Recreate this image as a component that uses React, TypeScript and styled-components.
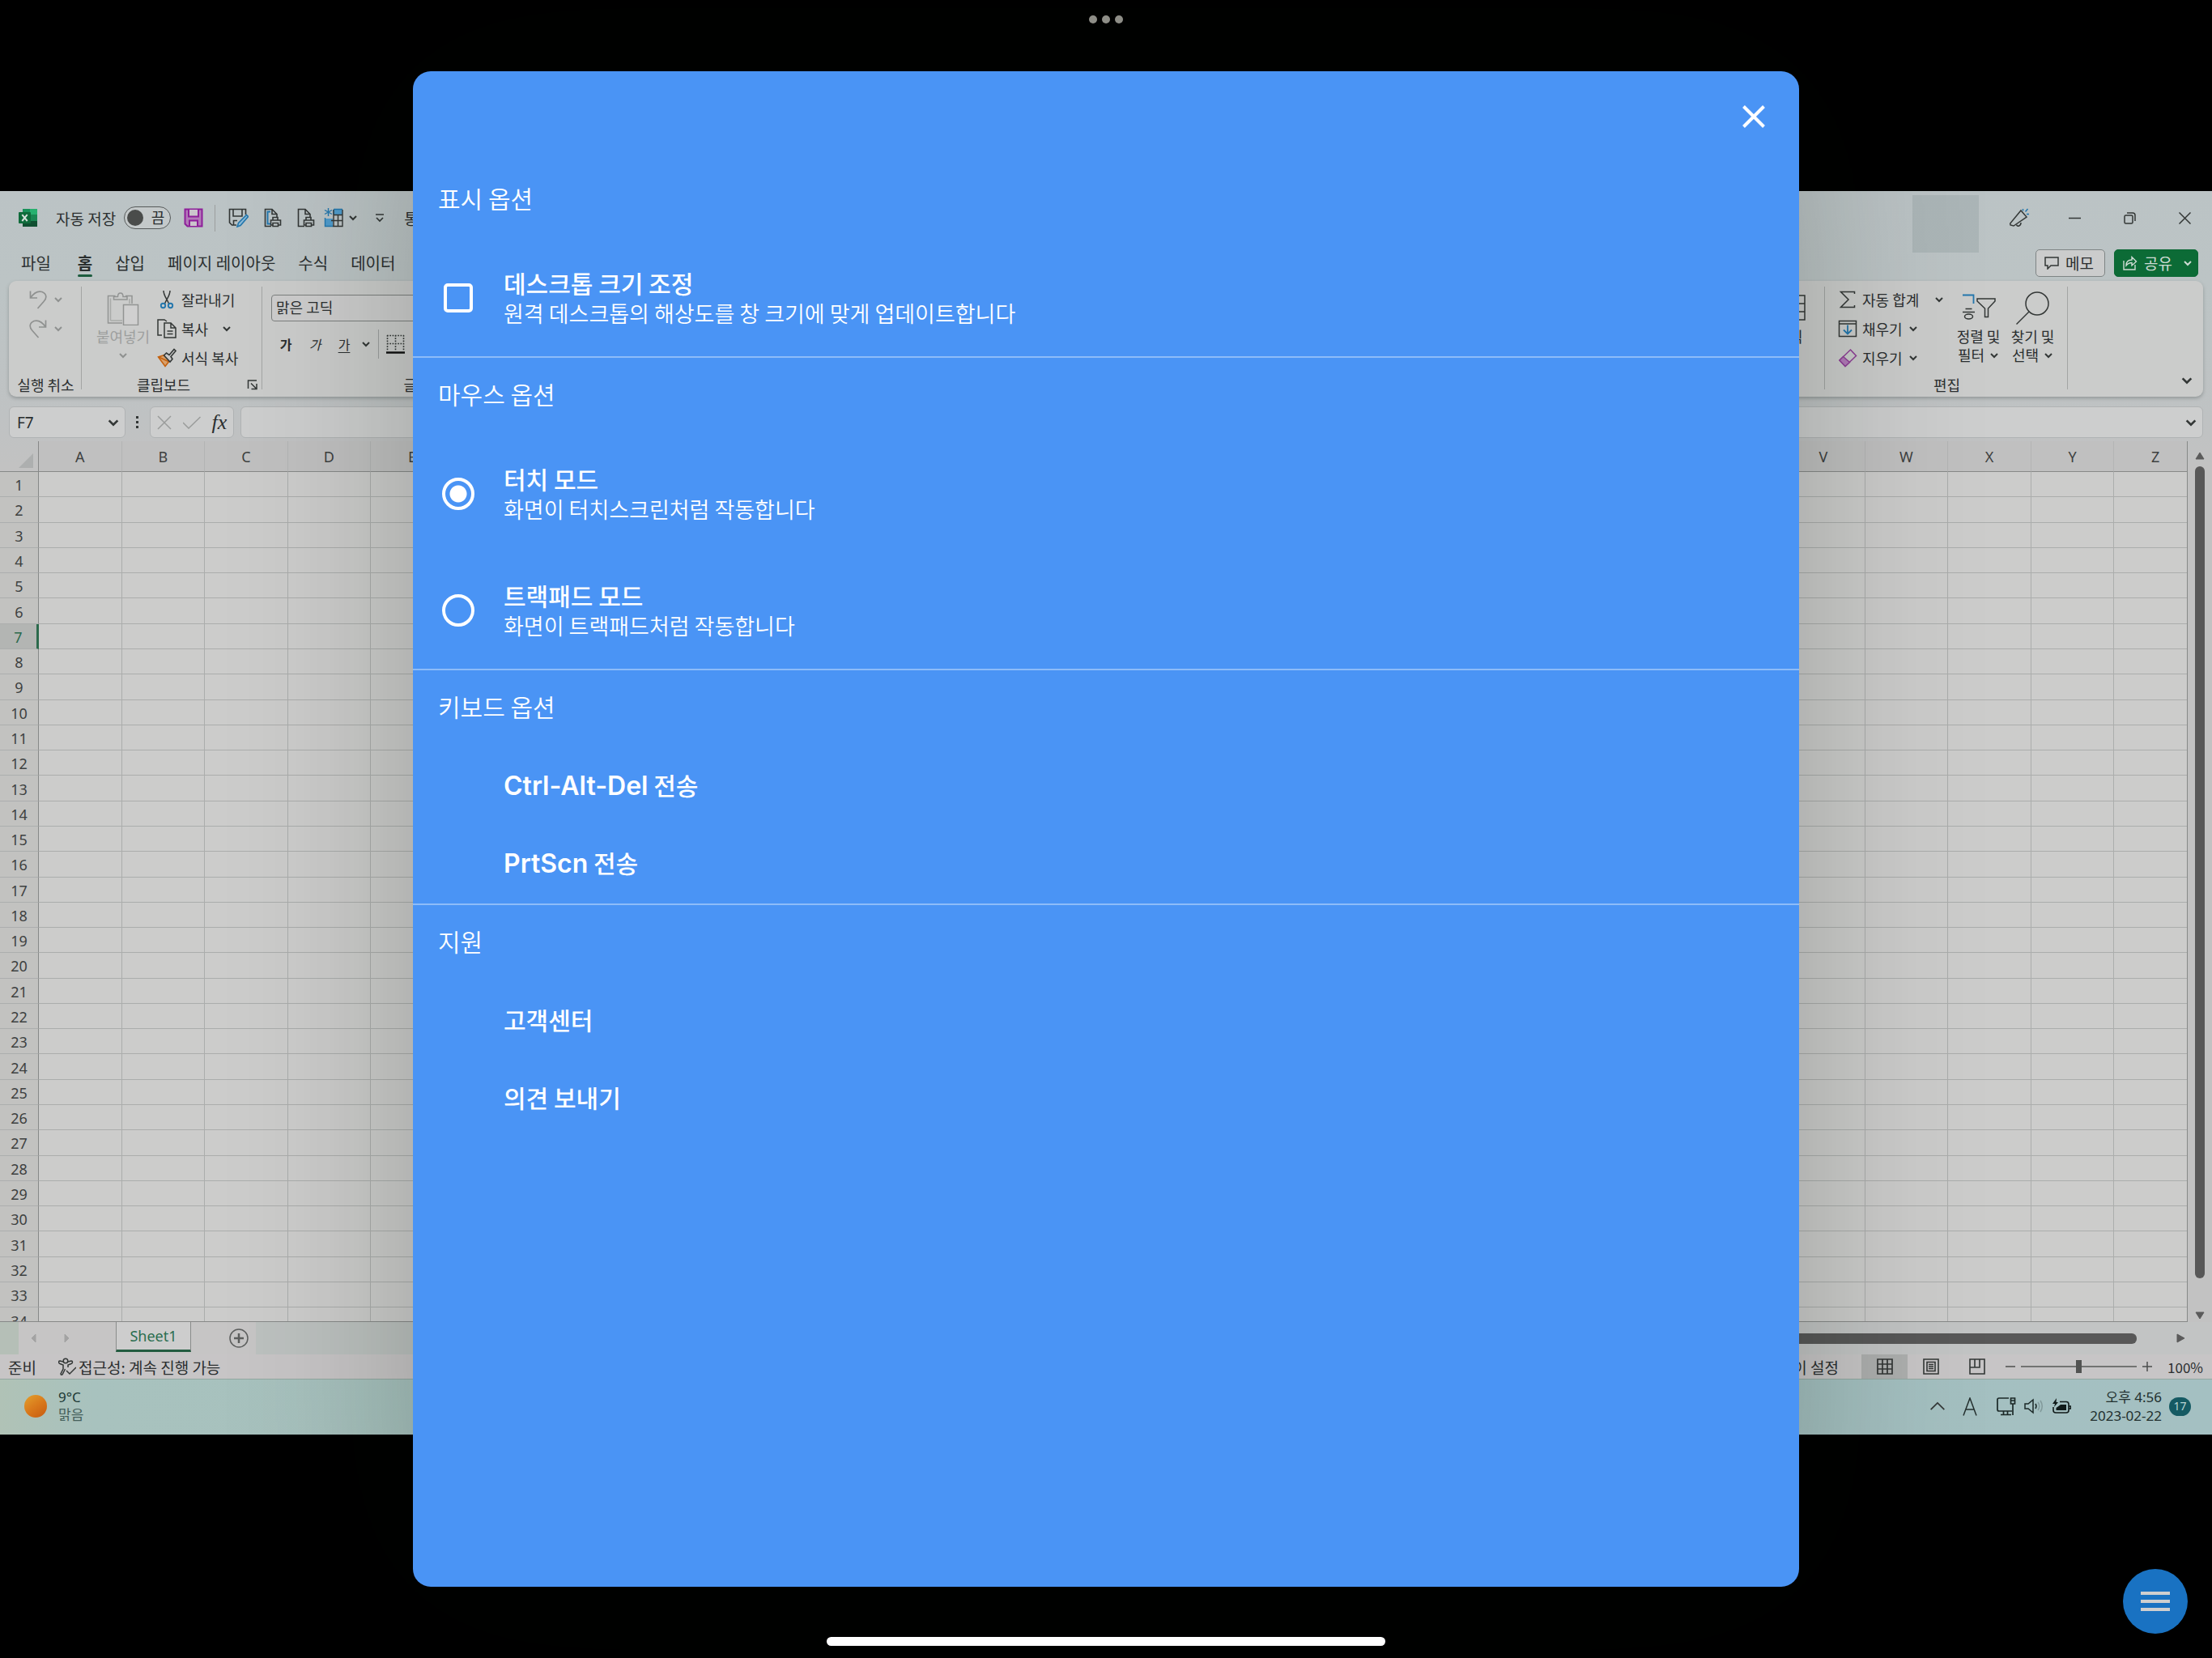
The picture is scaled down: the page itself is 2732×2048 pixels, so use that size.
import React from "react";
import styled, { createGlobalStyle, css } from "styled-components";

const uiFont = `"Noto Sans", "Noto Sans CJK KR", sans-serif`;
const krFont = `"Noto Sans CJK KR", "Noto Sans", sans-serif`;

const GlobalStyle = createGlobalStyle`
  *, *::before, *::after { box-sizing: border-box; }
  html, body { margin: 0; padding: 0; background: #000; }
  body { font-family: ${krFont}; }
  button, input, select { font: inherit; color: inherit; margin: 0; }
  button { border: 0; padding: 0; background: none; cursor: pointer; }
  svg { display: block; flex: none; }
`;

/* ---------- screen ---------- */

const Screen = styled.div`
  position: relative;
  min-height: 100vh;
  padding-bottom: 40px;
  display: flex;
  flex-direction: column;
  justify-content: center;
  background: #000;
  overflow: hidden;
`;

const RemoteDesktop = styled.main`
  width: 100%;
  aspect-ratio: 683 / 384;
  display: flex;
  flex-direction: column;
  color: #2b2f30;
  font-size: 18px;
  line-height: 23px;
  white-space: nowrap;
  overflow: hidden;
`;

const ExcelWindow = styled.section`
  flex: 1;
  min-height: 0;
  display: flex;
  flex-direction: column;
  background: linear-gradient(#bbc3c5 0px, #bcc4c5 110px, #bfc2c3 280px, #c2c2c2 340px);
`;

/* ---------- title bar ---------- */

const TitleBar = styled.header`
  height: 66px;
  display: flex;
  align-items: center;
  justify-content: space-between;
  font-size: 19px;
`;

const TitleSide = styled.div<{ $left?: number }>`
  display: flex;
  align-items: center;
  height: 100%;
  padding-left: ${(p) => p.$left ?? 0}px;
`;

const AutoSave = styled.label`
  display: flex;
  align-items: center;
  gap: 10px;
  padding: 0 8px 0 22px;
`;

const Toggle = styled.input`
  appearance: none;
  position: relative;
  width: 58px;
  height: 28px;
  border: 1px solid #565a5a;
  border-radius: 14px;
  background: #c4c9ca;
  &::before {
    content: "";
    position: absolute;
    left: 3px;
    top: 3px;
    width: 20px;
    height: 20px;
    border-radius: 50%;
    background: #4a4c4b;
  }
  &::after {
    content: "끔";
    position: absolute;
    right: 7px;
    top: 0;
    font-size: 18px;
    line-height: 25px;
  }
`;

const IconButton = styled.button<{ $w: number }>`
  width: ${(p) => p.$w}px;
  height: 36px;
  display: flex;
  align-items: center;
  justify-content: center;
  gap: 6px;
`;

const Rule = styled.span<{ $h?: number; $m?: string }>`
  flex: none;
  width: 1px;
  ${(p) => (p.$h ? `height: ${p.$h}px;` : "align-self: stretch;")}
  margin: ${(p) => p.$m ?? "0"};
  background: #9c9f9f;
`;

const AccountPatch = styled.span`
  width: 82px;
  height: 71px;
  margin: 5px 16px 0 0;
  align-self: flex-start;
  background: rgba(125, 138, 145, 0.25);
`;

/* ---------- ribbon tabs ---------- */

const TabRow = styled.div`
  height: 45px;
  display: flex;
  align-items: center;
  justify-content: space-between;
  padding: 0 17px 0 22px;
`;

const Tabs = styled.nav`
  display: flex;
  gap: 20px;
  height: 100%;
`;

const Tab = styled.button<{ $active?: boolean }>`
  position: relative;
  padding: 0 4px;
  font-size: 20px;
  line-height: 44px;
  font-weight: ${(p) => (p.$active ? 600 : 400)};
  &:first-child { padding-right: 9px; }
  ${(p) =>
    p.$active &&
    css`
      &::after {
        content: "";
        position: absolute;
        left: 4px;
        right: 4px;
        bottom: 5px;
        height: 3px;
        border-radius: 2px;
        background: #1d5c3e;
      }
    `}
`;

const TabActions = styled.div`
  display: flex;
  gap: 11px;
`;

const ActionButton = styled.button<{ $green?: boolean }>`
  height: 34px;
  padding: 0 ${(p) => (p.$green ? 6 : 13)}px 0 10px;
  display: flex;
  align-items: center;
  gap: 8px;
  border-radius: 5px;
  font-size: 19px;
  border: 1px solid ${(p) => (p.$green ? "#0c6835" : "#7f8585")};
  background: ${(p) => (p.$green ? "#0c6b36" : "#cbcccc")};
  color: ${(p) => (p.$green ? "#cfdcd4" : "#2b2f30")};
  & > svg:last-child:not(:first-child) { margin-left: 5px; }
`;

/* ---------- ribbon ---------- */

const Ribbon = styled.div`
  height: 143px;
  margin: 0 11px;
  display: flex;
  border-radius: 9px;
  background: #cbcccb;
  box-shadow: 0 2px 4px rgba(90, 100, 100, 0.45);
`;

const RibbonRule = styled(Rule)`
  margin: 7px 0 9px;
  background: #a3a5a4;
`;

const Group = styled.div<{ $w?: number }>`
  ${(p) => (p.$w ? `width: ${p.$w}px;` : "")}
  display: flex;
  flex-direction: column;
`;

const GroupBody = styled.div<{ $left?: number; $right?: number }>`
  flex: 1;
  display: flex;
  padding-left: ${(p) => p.$left ?? 0}px;
  padding-right: ${(p) => p.$right ?? 0}px;
`;

const GroupLabel = styled.div`
  height: 30px;
  display: flex;
  align-items: center;
  & > span { flex: 1; text-align: center; padding-left: 2px; }
  & > svg { margin: 0 4px; }
`;

const ToolColumn = styled.div`
  display: flex;
  flex-direction: column;
  padding-top: 5px;
`;

const ToolRow = styled.button<{ $gap?: number }>`
  height: 36px;
  display: flex;
  align-items: center;
  gap: 6px;
  & > svg:last-child { margin-left: ${(p) => p.$gap ?? 1}px; }
`;

const BigButton = styled.button<{ $w: number; $muted?: boolean }>`
  width: ${(p) => p.$w}px;
  padding-top: 13px;
  display: flex;
  flex-direction: column;
  align-items: center;
  color: ${(p) => (p.$muted ? "#9d9f9e" : "inherit")};
  & > svg { margin-bottom: 2px; }
`;

const BigLine = styled.span`
  height: 23px;
  display: flex;
  align-items: center;
  gap: 6px;
`;

const FontColumn = styled.div`
  flex: 1;
  display: flex;
  flex-direction: column;
  gap: 10px;
  padding-top: 17px;
`;

const FontSelect = styled.select`
  appearance: none;
  width: 260px;
  height: 33px;
  padding: 0 5px 2px;
  border: 1px solid #7c7f7e;
  border-radius: 4px;
  background: #cdcdcd;
  font-size: 18px;
`;

const FontRow = styled.div`
  display: flex;
  align-items: center;
  height: 36px;
`;

const FontButton = styled(IconButton)<{ $kind?: "b" | "i" | "u" }>`
  font-size: 16px;
  font-weight: ${(p) => (p.$kind === "b" ? 700 : 400)};
  font-style: ${(p) => (p.$kind === "i" ? "italic" : "normal")};
  text-decoration: ${(p) => (p.$kind === "u" ? "underline" : "none")};
  text-underline-offset: 3px;
`;

const Filler = styled.div`
  flex: 1;
`;

const CollapseCell = styled.div`
  width: 167px;
  display: flex;
  align-items: flex-end;
  justify-content: flex-end;
  padding: 0 2px 2px 0;
`;

/* ---------- formula bar ---------- */

const FormulaBar = styled.div`
  display: flex;
  align-items: center;
  padding: 12px 11px 4px;
  & > :last-child { margin-left: 8px; }
`;

const Field = styled.div<{ $w?: number }>`
  ${(p) => (p.$w ? `width: ${p.$w}px;` : "flex: 1;")}
  height: 39px;
  display: flex;
  align-items: center;
  border: 1px solid #b0b3b4;
  border-radius: 6px;
  background: #cdcece;
`;

const FieldInput = styled.input`
  flex: 1;
  min-width: 0;
  height: 100%;
  border: 0;
  outline: 0;
  background: none;
  padding: 0 9px;
  font-family: ${uiFont};
  font-size: 19px;
`;

const Fx = styled.span`
  font-family: "Liberation Serif", serif;
  font-style: italic;
  font-size: 26px;
`;

/* ---------- sheet ---------- */

const SheetArea = styled.div`
  flex: 1;
  min-height: 0;
  display: flex;
`;

const SheetClip = styled.div`
  flex: 1;
  min-width: 0;
  overflow: hidden;
  border-right: 1px solid #878988;
  border-bottom: 1px solid #878988;
`;

const Grid = styled.table`
  width: calc(100% + 13px);
  height: calc(100% + 15px);
  table-layout: fixed;
  border-collapse: separate;
  border-spacing: 0;
  font-family: ${uiFont};
  font-size: 18px;
  line-height: 20px;
`;

const Corner = styled.td`
  width: 48px;
  height: 38px;
  padding: 0 6px 4px 0;
  vertical-align: bottom;
  border-right: 1px solid #878988;
  border-bottom: 1px solid #878988;
  & > svg { margin-left: auto; }
`;

const ColHead = styled.th`
  height: 38px;
  padding: 0;
  font-weight: 400;
  color: #3e4140;
  background: #c0c0c0;
  border-right: 1px solid #b3b4b4;
  border-bottom: 1px solid #878988;
`;

const RowHead = styled.th<{ $active?: boolean }>`
  padding: 2px 0 0;
  font-weight: 400;
  color: ${(p) => (p.$active ? "#2b6a4c" : "#3e4140")};
  background: ${(p) => (p.$active ? "#b3b5b3" : "#c2c2c0")};
  border-right: ${(p) => (p.$active ? "3px solid #2b6a4c" : "1px solid #878988")};
  border-bottom: 1px solid #acaeae;
`;

const Cell = styled.td`
  padding: 0;
  background: #cccccb;
  border-right: 1px solid #abadac;
  border-bottom: 1px solid #abadac;
`;

const ScrollColumn = styled.div`
  width: 30px;
  display: flex;
  flex-direction: column;
  align-items: center;
  gap: 7px;
  padding: 12px 0 2px;
`;

const ScrollThumb = styled.div`
  flex: 1;
  width: 12px;
  margin-bottom: 33px;
  border-radius: 6px;
  background: #585858;
`;

const SheetBar = styled.div`
  height: 40px;
  display: flex;
  align-items: center;
  background: linear-gradient(90deg, #b5bfb7 0, #b5bfb7 23px, #c6c5c5 23px, #c6c5c5 316px, #bcc1bf 316px, #bcc1bf 50%, #c2c4c4 50%);
`;

const SheetNav = styled.div`
  width: 143px;
  display: flex;
  gap: 30px;
  padding-left: 35px;
`;

const SheetTab = styled.button`
  width: 93px;
  height: 37px;
  align-self: flex-start;
  border: solid #8a8c8b;
  border-width: 0 1px;
  border-bottom: 3px solid #235c40;
  background: #cdcdcd;
  color: #2b6e4f;
  font-family: ${uiFont};
  font-size: 18px;
`;

const HScroll = styled.div`
  flex: 1;
  display: flex;
  align-items: center;
  justify-content: space-between;
  padding: 0 33px 0 900px;
`;

const HThumb = styled.div`
  flex: 1;
  height: 13px;
  margin-right: 48px;
  border-radius: 6px;
  background: #585858;
`;

/* ---------- status bar ---------- */

const StatusBar = styled.footer`
  height: 31px;
  display: flex;
  align-items: center;
  justify-content: space-between;
  border-bottom: 1px solid #93a8a1;
  background: #c7c5c6;
  font-size: 19px;
`;

const StatusSide = styled.div<{ $left?: number; $right?: number }>`
  height: 100%;
  display: flex;
  align-items: center;
  padding: 0 ${(p) => p.$right ?? 0}px 0 ${(p) => p.$left ?? 0}px;
`;

const StatusItem = styled.span<{ $left?: number; $right?: number }>`
  display: flex;
  align-items: center;
  gap: 3px;
  padding: 0 ${(p) => p.$right ?? 0}px 0 ${(p) => p.$left ?? 0}px;
`;

const ZoomValue = styled.span`
  padding-left: 12px;
  font-size: 17px;
`;

const ViewButton = styled.button<{ $active?: boolean }>`
  width: 57px;
  height: 100%;
  display: flex;
  align-items: center;
  justify-content: center;
  background: ${(p) => (p.$active ? "#adafae" : "none")};
`;

const ZoomRange = styled.input`
  appearance: none;
  width: 143px;
  height: 18px;
  background: linear-gradient(#727372, #727372) center / 100% 2px no-repeat;
  &::-webkit-slider-thumb {
    appearance: none;
    width: 7px;
    height: 16px;
    background: #525352;
  }
`;

/* ---------- taskbar ---------- */

const Taskbar = styled.footer`
  height: 68px;
  display: flex;
  align-items: center;
  justify-content: space-between;
  padding: 0 26px 2px 30px;
  background: linear-gradient(90deg, #b0c2b6 0, #a8c2be 115px, #a4bfbc 50%, #a4c0c2 100%);
`;

const Weather = styled.div`
  display: flex;
  align-items: center;
  gap: 14px;
  font-family: ${uiFont};
  font-size: 17px;
  line-height: 22px;
  color: #1d3a35;
  & span { display: block; }
  & span + span { color: #45605b; }
`;

const Sun = styled.i`
  width: 28px;
  height: 28px;
  border-radius: 50%;
  background: linear-gradient(145deg, #e3a02c, #d9791b 50%, #c65a10);
`;

const Tray = styled.div`
  display: flex;
  align-items: center;
  font-family: ${uiFont};
`;

const TrayItem = styled.button<{ $w: number }>`
  width: ${(p) => p.$w}px;
  height: 40px;
  display: flex;
  align-items: center;
  justify-content: center;
`;

const Clock = styled.time`
  width: 90px;
  margin: 0 9px 0 14px;
  text-align: right;
  font-size: 17px;
  line-height: 23px;
  color: #22302f;
`;

const Badge = styled.span`
  width: 27px;
  height: 23px;
  border-radius: 12px;
  background: #155a63;
  color: #b9d3d3;
  font-size: 14px;
  line-height: 22px;
  text-align: center;
`;

/* ---------- options dialog ---------- */

const Overlay = styled.div`
  position: absolute;
  inset: 0;
  display: flex;
  justify-content: center;
  padding: 88px 30px;
`;

const Dialog = styled.section`
  width: 100%;
  max-width: 1712px;
  border-radius: 22px;
  background: #4a94f5;
  color: #fff;
  box-shadow: 0 0 230px rgba(0, 18, 6, 0.24);
`;

const DialogHeader = styled.div`
  height: 112px;
  display: flex;
  justify-content: flex-end;
`;

const CloseButton = styled.button`
  width: 112px;
  height: 112px;
  display: flex;
  align-items: center;
  justify-content: center;
`;

const OptionSection = styled.section`
  & + & { border-top: 2px solid #8dbcf9; }
`;

const OptionHeading = styled.h2`
  margin: 0;
  height: 96px;
  padding: 0 31px 8px;
  display: flex;
  align-items: center;
  font-size: 30px;
  font-weight: 350;
`;

const OptionRow = styled.label`
  height: 144px;
  display: grid;
  grid-template-columns: 112px 1fr;
  align-items: center;
`;

const Choice = styled.input`
  appearance: none;
  justify-self: center;
  border: 4px solid #fff;
  cursor: pointer;
  &[type="checkbox"] {
    width: 36px;
    height: 36px;
    border-radius: 5px;
  }
  &[type="radio"] {
    width: 40px;
    height: 40px;
    border-radius: 50%;
  }
  &[type="radio"]:checked {
    background: radial-gradient(circle, #fff 10px, transparent 11px);
  }
`;

const OptionTitle = styled.span`
  display: block;
  margin-bottom: 4px;
  font-size: 30px;
  font-weight: 500;
  line-height: 34px;
`;

const OptionHint = styled.span`
  display: block;
  font-size: 27px;
  font-weight: 350;
  line-height: 34px;
`;

const CommandButton = styled.button`
  width: 100%;
  height: 96px;
  padding: 0 112px 6px;
  display: block;
  text-align: left;
  font-size: 30px;
  font-weight: 500;
  line-height: 90px;
`;

const KeyName = styled.span`
  font-family: Inter, "Noto Sans", sans-serif;
  font-size: 32px;
  font-weight: 600;
`;

const Multitask = styled.div`
  position: absolute;
  top: 19px;
  left: 0;
  right: 0;
  display: flex;
  justify-content: center;
  gap: 6px;
  & i { width: 10px; height: 10px; border-radius: 50%; background: #8e8e87; }
`;

const HomeIndicator = styled.div`
  position: absolute;
  bottom: 15px;
  left: 50%;
  width: 690px;
  height: 11px;
  border-radius: 6px;
  background: #fff;
  transform: translateX(-50%);
`;

const MenuButton = styled.button`
  position: absolute;
  right: 30px;
  bottom: 30px;
  width: 80px;
  height: 80px;
  border-radius: 50%;
  background: #1972c2;
  display: flex;
  flex-direction: column;
  align-items: center;
  justify-content: center;
  gap: 6px;
  & i { width: 36px; height: 4px; background: #cfcfcf; }
`;

/* ---------- drawings ---------- */

const ink = "#333736";

const Chevron = ({ s = 12, c = ink, w = 2, up = false }: { s?: number; c?: string; w?: number; up?: boolean }) => (
  <svg width={s} height={s} viewBox="0 0 12 12" fill="none" stroke={c} strokeWidth={w}>
    <path d={up ? "M1 8.500 6 3.500l5 5" : "M2 4l4 4 4-4"} />
  </svg>
);

const ExcelLogo = () => (
  <svg width="24" height="24" viewBox="0 0 24 24">
    <path d="M5 1h9v7H5z" fill="#19915a" />
    <path d="M14 1h9v7h-9z" fill="#27b06f" />
    <path d="M5 8h9v8H5z" fill="#12653c" />
    <path d="M14 8h9v8h-9z" fill="#1a8653" />
    <path d="M5 16h18v7H5z" fill="#104f31" />
    <rect y="5" width="15" height="14" rx="1" fill="#0f6b3b" />
    <path d="M4.300 8.200 10.700 16M10.700 8.200 4.300 16" stroke="#d5e0da" strokeWidth="2" />
  </svg>
);

const SaveIcon = () => (
  <svg width="24" height="24" viewBox="0 0 24 24" fill="#b27ab8" stroke="#8e1f9a" strokeWidth="2">
    <path d="M1.500 1.500h21v21H4.500l-3-3z" />
    <path d="M6 2v8.500h12V2" fill="#cbc5cc" />
    <path d="M7 22v-6.500h10V22" fill="#cbc5cc" />
  </svg>
);

const SaveAsIcon = () => (
  <svg width="25" height="24" viewBox="0 0 25 24" fill="none" stroke={ink} strokeWidth="1.600">
    <path d="M10 21H4.500L1.500 18V1.500h20V8M6 2v8h11V2M6.500 21v-5.500H11" />
    <path d="M22.500 8.500l2 2-9.500 11-4 1.500 1.500-4.500z" fill="#8dbbd8" stroke="#2477ad" />
  </svg>
);

const PrintPreviewIcon = ({ blue = false }: { blue?: boolean }) => (
  <svg width="22" height="24" viewBox="0 0 22 24" fill="none" stroke={ink} strokeWidth="1.600">
    <path d="M9 22.500H1.500v-21h8.500l6 6v4M10 1.500v6h6" />
    {blue && <path d="M8 19.500H4.500v-15H8" stroke="#2477ad" strokeWidth="2" />}
    <path d="M11 15v-3.500h6V15M11 21H8.500v-6h12v6H18M11 18.500h6.500v4H11z" />
  </svg>
);

const TableIcon = () => (
  <svg width="24" height="24" viewBox="0 0 24 24" fill="none" stroke={ink} strokeWidth="1.400">
    <path d="M11 2h12v6H11zM1 13h10v9.500H1z" fill="#4f9bcb" stroke="none" />
    <path d="M12 8.500h11M9 15.500h14M12 2v20.500M17.500 8.500v14M23 2v20.500H11" />
    <path d="M1.500 12v10.500H11M12 1.500h11" stroke="#2477ad" />
    <path d="M5.500 0v10M1 2.500l9 5M10 2.500l-9 5" stroke="#2477ad" />
  </svg>
);

const MoreIcon = () => (
  <svg width="12" height="12" viewBox="0 0 12 12" fill="none" stroke={ink} strokeWidth="1.700">
    <path d="M1 2h10M2 6l4 4 4-4" />
  </svg>
);

const MegaphoneIcon = () => (
  <svg width="24" height="24" viewBox="0 0 24 24" fill="none" stroke={ink} strokeWidth="1.500">
    <path d="M14 3l7 8-16 11-4-1-.3-2z" />
    <path d="M8.500 20.500c1 3 5.500 2 5.500-2.500" />
    <path d="M16.500 1v2.500M22.500 1l-3 3.500M24 7.500h-3" stroke="#2477ad" />
  </svg>
);

const UndoIcon = ({ flip = false }: { flip?: boolean }) => (
  <svg width="24" height="24" viewBox="0 0 24 24" fill="none" stroke="#8f9190" strokeWidth="1.700">
    <g transform={flip ? "matrix(-1 0 0 1 24 0)" : undefined}>
      <path d="M2.500 1.500v8.500H11M2.500 10C7 3.500 12 1 17 2.500c6 2.500 6 8 2 12L11.500 23" />
    </g>
  </svg>
);

const PasteIcon = () => (
  <svg width="42" height="42" viewBox="0 0 42 42" fill="none" stroke="#929493" strokeWidth="1.500">
    <path d="M20 39H2.500V5.500h9M24 5.500h8V15" />
    <path d="M5.500 36V8.500M5.500 36H20M29 9v6" opacity=".6" />
    <path d="M9.500 10V6.500h5c0-6 6.500-6 6.500 0h5V10z" />
    <path d="M21.500 16.500h18v25h-18z" fill="#d0d0d0" />
  </svg>
);

const CutIcon = () => (
  <svg width="24" height="24" viewBox="0 0 24 24" fill="none" stroke={ink} strokeWidth="1.500">
    <path d="M8 1c0 6 4 10 6.500 16M16 1c0 6-4 10-6.500 16" />
    <circle cx="7.500" cy="19.500" r="2.700" stroke="#2477ad" strokeWidth="1.900" />
    <circle cx="16.500" cy="19.500" r="2.700" stroke="#2477ad" strokeWidth="1.900" />
  </svg>
);

const CopyIcon = () => (
  <svg width="24" height="24" viewBox="0 0 24 24" fill="none" stroke={ink} strokeWidth="1.500">
    <path d="M6 20H1V1h8l3 2" />
    <path d="M9 5h8l6 6v12H9zM17 5v6h6M12.500 15h7M12.500 18.500h7" />
  </svg>
);

const BrushIcon = () => (
  <svg width="24" height="24" viewBox="0 0 24 24" fill="none" strokeWidth="1.600">
    <path d="M9 8.500L1.500 11 10 22.500l5.500-7z" fill="#d9a06a" stroke="#c4610f" />
    <path d="M2 11l12 5.500" stroke="#c4610f" />
    <path d="M8.500 9l3-3 3.500 2.500L21 1.500l2 2-6 7 2 3-3 3.500z" fill="#c9c9c9" stroke={ink} />
  </svg>
);

const BordersIcon = () => (
  <svg width="23" height="24" viewBox="0 0 23 24" fill="none" stroke={ink}>
    <path d="M1 1.500h21M1 11.500h21M1.500 1v19M11.500 1v19M21.500 1v19" strokeWidth="1.600" strokeDasharray="1.700 1.600" />
    <path d="M0 22.500h23" strokeWidth="2.500" stroke="#111" />
  </svg>
);

const LauncherIcon = () => (
  <svg width="14" height="14" viewBox="0 0 14 14" fill="none" stroke={ink} strokeWidth="1.500">
    <path d="M1.500 12V2H12M5 5.500l6.500 6.500M12 6v6.500H5.500" />
  </svg>
);

const CellFormatIcon = () => (
  <svg width="42" height="42" viewBox="0 0 42 42" fill="none" stroke={ink} strokeWidth="1.500">
    <path d="M4 5h36v30H4zM4 15h36M4 25h36M16 5v30M30 5v30" />
    <path d="M10 0h20" stroke="#2477ad" strokeWidth="2" />
  </svg>
);

const SigmaIcon = () => (
  <svg width="24" height="24" viewBox="0 0 24 24" fill="none" stroke={ink} strokeWidth="1.500">
    <path d="M20.500 5V2.500h-17L13 12 3.500 21.500h17V19" />
  </svg>
);

const FillIcon = () => (
  <svg width="24" height="24" viewBox="0 0 24 24" fill="none" stroke={ink} strokeWidth="1.500">
    <path d="M1.500 2.500h21v19h-21zM1.500 6h21" />
    <path d="M12 7.500v11M7 13.500l5 5 5-5" stroke="#2477ad" strokeWidth="1.800" />
  </svg>
);

const EraserIcon = () => (
  <svg width="24" height="24" viewBox="0 0 24 24" fill="none" stroke="#8e3f96" strokeWidth="1.500">
    <path d="M15.500 2l7 7.500L9 22.500 2 15z" />
    <path d="M6.500 10.500l8 7L9 22.500 2 15z" fill="#b27ab8" />
  </svg>
);

const SortIcon = () => (
  <svg width="42" height="42" viewBox="0 0 42 42" fill="none" stroke={ink} strokeWidth="1.500">
    <path d="M1 4.500h13.500V15" stroke="#2477ad" strokeWidth="1.800" />
    <path d="M4.500 21.500h8M1 25.500h15" />
    <ellipse cx="8.500" cy="31" rx="5" ry="3" />
    <path d="M19 9h22v3l-8.500 9v10.500h-4V21L19 12z" />
  </svg>
);

const FindIcon = () => (
  <svg width="42" height="42" viewBox="0 0 42 42" fill="none" stroke={ink} strokeWidth="1.500">
    <circle cx="26" cy="15" r="14" />
    <path d="M16 25L.5 40.500" />
  </svg>
);

const Triangle = ({ d, c = "#5b5b5b", size = 12 }: { d: string; c?: string; size?: number }) => (
  <svg width={size} height={size} viewBox="0 0 12 12" fill={c} stroke={c} strokeWidth="1" strokeLinejoin="round">
    <path d={d} />
  </svg>
);

const columns = "ABCDEFGHIJKLMNOPQRSTUVWXYZ".split("");
const rows = Array.from({ length: 34 }, (_, i) => i + 1);

/* ---------- parts ---------- */

function ExcelTitle() {
  return (
    <TitleBar>
      <TitleSide $left={23}>
        <ExcelLogo />
        <AutoSave>
          자동 저장
          <Toggle type="checkbox" role="switch" />
        </AutoSave>
        <IconButton $w={40} aria-label="저장"><SaveIcon /></IconButton>
        <Rule $h={33} $m="0 6px" />
        <IconButton $w={44} aria-label="다른 이름으로 저장"><SaveAsIcon /></IconButton>
        <IconButton $w={42} aria-label="인쇄 미리 보기"><PrintPreviewIcon blue /></IconButton>
        <IconButton $w={40} aria-label="빠른 인쇄"><PrintPreviewIcon /></IconButton>
        <IconButton $w={46} aria-label="표"><TableIcon /><Chevron /></IconButton>
        <IconButton $w={50} aria-label="더 보기"><MoreIcon /></IconButton>
        <StatusItem $left={5}>통합 문서1</StatusItem>
      </TitleSide>
      <TitleSide>
        <AccountPatch />
        <IconButton $w={68} aria-label="새로운 기능"><MegaphoneIcon /></IconButton>
        <IconButton $w={68} aria-label="최소화">
          <svg width="15" height="15" stroke={ink} strokeWidth="1.500"><path d="M0 7.500h15" /></svg>
        </IconButton>
        <IconButton $w={68} aria-label="이전 크기로">
          <svg width="15" height="15" fill="none" stroke={ink} strokeWidth="1.500">
            <rect x="1" y="4" width="10" height="10" rx="1.500" />
            <path d="M4 1h7q3 0 3 3v7" />
          </svg>
        </IconButton>
        <IconButton $w={68} aria-label="닫기">
          <svg width="15" height="15" stroke={ink} strokeWidth="1.500"><path d="M.5.5l14 14M14.500.5l-14 14" /></svg>
        </IconButton>
      </TitleSide>
    </TitleBar>
  );
}

function RibbonTabs() {
  return (
    <TabRow>
      <Tabs>
        <Tab>파일</Tab>
        <Tab $active>홈</Tab>
        <Tab>삽입</Tab>
        <Tab>페이지 레이아웃</Tab>
        <Tab>수식</Tab>
        <Tab>데이터</Tab>
      </Tabs>
      <TabActions>
        <ActionButton>
          <svg width="18" height="16" fill="none" stroke={ink} strokeWidth="1.500">
            <path d="M1 1h16v10H8l-4 4v-4H1z" />
          </svg>
          메모
        </ActionButton>
        <ActionButton $green>
          <svg width="18" height="18" fill="none" stroke="#cfdcd4" strokeWidth="1.400">
            <path d="M1 6v11h14v-6M4 12c0-5 3-7 7-7V1.500l5.500 5.500L11 12V8.500c-3 0-5 1-7 3.500z" />
          </svg>
          공유
          <Chevron c="#cfdcd4" />
        </ActionButton>
      </TabActions>
    </TabRow>
  );
}

function ExcelRibbon() {
  return (
    <Ribbon>
      <Group $w={89}>
        <GroupBody $left={24}>
          <ToolColumn>
            <ToolRow aria-label="실행 취소"><UndoIcon /><Chevron c="#8f9190" /></ToolRow>
            <ToolRow aria-label="다시 실행"><UndoIcon flip /><Chevron c="#8f9190" /></ToolRow>
          </ToolColumn>
        </GroupBody>
        <GroupLabel><span>실행 취소</span></GroupLabel>
      </Group>
      <RibbonRule />
      <Group $w={222}>
        <GroupBody $left={9}>
          <BigButton $w={84} $muted>
            <PasteIcon />
            <BigLine>붙여넣기</BigLine>
            <BigLine><Chevron c="#8f9190" /></BigLine>
          </BigButton>
          <ToolColumn>
            <ToolRow><CutIcon /><span>잘라내기</span></ToolRow>
            <ToolRow $gap={11}><CopyIcon /><span>복사</span><Chevron /></ToolRow>
            <ToolRow><BrushIcon /><span>서식 복사</span></ToolRow>
          </ToolColumn>
        </GroupBody>
        <GroupLabel><span>클립보드</span><LauncherIcon /></GroupLabel>
      </Group>
      <RibbonRule />
      <Group $w={380}>
        <GroupBody $left={11}>
          <FontColumn>
            <FontSelect aria-label="글꼴" defaultValue="맑은 고딕">
              <option>맑은 고딕</option>
            </FontSelect>
            <FontRow>
              <FontButton $w={36} $kind="b">가</FontButton>
              <FontButton $w={36} $kind="i">가</FontButton>
              <FontButton $w={36} $kind="u">가</FontButton>
              <IconButton $w={18} aria-label="밑줄 종류"><Chevron w={2} /></IconButton>
              <Rule $m="0 0 0 6px" />
              <IconButton $w={40} aria-label="테두리"><BordersIcon /></IconButton>
            </FontRow>
          </FontColumn>
        </GroupBody>
        <GroupLabel><span>글꼴</span></GroupLabel>
      </Group>
      <Filler />
      <Group $w={78}>
        <GroupBody>
          <BigButton $w={70}>
            <CellFormatIcon />
            <BigLine>서식</BigLine>
          </BigButton>
        </GroupBody>
      </Group>
      <RibbonRule />
      <Group $w={299}>
        <GroupBody $left={16} $right={9}>
          <ToolColumn>
            <ToolRow $gap={13}><SigmaIcon /><span>자동 합계</span><Chevron /></ToolRow>
            <ToolRow><FillIcon /><span>채우기</span><Chevron /></ToolRow>
            <ToolRow><EraserIcon /><span>지우기</span><Chevron /></ToolRow>
          </ToolColumn>
          <Filler />
          <BigButton $w={67}>
            <SortIcon />
            <BigLine>정렬 및</BigLine>
            <BigLine>필터<Chevron /></BigLine>
          </BigButton>
          <BigButton $w={67}>
            <FindIcon />
            <BigLine>찾기 및</BigLine>
            <BigLine>선택<Chevron /></BigLine>
          </BigButton>
        </GroupBody>
        <GroupLabel><span>편집</span></GroupLabel>
      </Group>
      <RibbonRule />
      <CollapseCell>
        <IconButton $w={36} aria-label="리본 축소"><Chevron s={16} w={2} /></IconButton>
      </CollapseCell>
    </Ribbon>
  );
}

function Formula() {
  return (
    <FormulaBar>
      <Field $w={144}>
        <FieldInput aria-label="이름 상자" defaultValue="F7" />
        <IconButton $w={28} aria-label="이름 목록"><Chevron s={16} /></IconButton>
      </Field>
      <IconButton $w={30} aria-label="크기 조정">
        <svg width="4" height="16" fill={ink}><path d="M0 0h3v3H0zM0 6h3v3H0zM0 12h3v3H0z" /></svg>
      </IconButton>
      <Field $w={104}>
        <IconButton $w={34} aria-label="취소">
          <svg width="18" height="18" stroke="#9a9c9b" strokeWidth="1.500"><path d="M1 1l16 16M17 1L1 17" /></svg>
        </IconButton>
        <IconButton $w={34} aria-label="입력">
          <svg width="22" height="16" fill="none" stroke="#9a9c9b" strokeWidth="1.500"><path d="M0 8l7 7L21.500 1" /></svg>
        </IconButton>
        <IconButton $w={34} aria-label="함수 삽입"><Fx>fx</Fx></IconButton>
      </Field>
      <Field>
        <FieldInput aria-label="수식 입력줄" />
        <IconButton $w={28} aria-label="수식 입력줄 확장"><Chevron s={16} /></IconButton>
      </Field>
    </FormulaBar>
  );
}

function Sheet() {
  return (
    <SheetArea>
      <SheetClip>
        <Grid>
          <thead>
            <tr>
              <Corner>
                <svg width="18" height="18" fill="#adafaf"><path d="M18 0v18H0z" /></svg>
              </Corner>
              {columns.map((c) => (
                <ColHead key={c} scope="col">{c}</ColHead>
              ))}
            </tr>
          </thead>
          <tbody>
            {rows.map((r) => (
              <tr key={r}>
                <RowHead scope="row" $active={r === 7}>{r}</RowHead>
                {columns.map((c) => (
                  <Cell key={c} />
                ))}
              </tr>
            ))}
          </tbody>
        </Grid>
      </SheetClip>
      <ScrollColumn>
        <Triangle d="M6 2l5 8H1z" />
        <ScrollThumb />
        <Triangle d="M6 10l5-8H1z" />
      </ScrollColumn>
    </SheetArea>
  );
}

function SheetFooter() {
  return (
    <>
      <SheetBar>
        <SheetNav>
          <Triangle d="M9 1v10L4 6z" c="#a3a3a3" />
          <Triangle d="M3 1v10l5-5z" c="#a3a3a3" />
        </SheetNav>
        <SheetTab>Sheet1</SheetTab>
        <IconButton $w={118} aria-label="새 시트">
          <svg width="24" height="24" fill="none" stroke="#5d5f5e" strokeWidth="1.500">
            <circle cx="12" cy="12" r="11" />
            <path d="M12 6v12M6 12h12" strokeWidth="2.500" />
          </svg>
        </IconButton>
        <HScroll>
          <HThumb />
          <Triangle d="M2 1v10l9-5z" />
        </HScroll>
      </SheetBar>
      <StatusBar>
        <StatusSide $left={10}>
          <StatusItem>준비</StatusItem>
          <StatusItem $left={27}>
            <svg width="22" height="22" fill="none" stroke={ink} strokeWidth="1.500">
              <circle cx="9" cy="4" r="2.800" />
              <path d="M6 5L2 4C0 4 0 7 2 7.500l4 1.500v5L3 20c0 1.500 2 1.500 2.500 0L8.500 14M12 5l4-1c2 0 2 3 0 3.500L12 9v3M10 16l4 4 8-8" />
            </svg>
            접근성: 계속 진행 가능
          </StatusItem>
        </StatusSide>
        <StatusSide $right={11}>
          <StatusItem $right={28}>디스플레이 설정</StatusItem>
          <ViewButton $active aria-label="기본 보기">
            <svg width="20" height="20" fill="none" stroke={ink} strokeWidth="1.700">
              <path d="M1 1h18v18H1zM1 7h18M1 13h18M7 1v18M13 1v18" />
            </svg>
          </ViewButton>
          <ViewButton aria-label="페이지 레이아웃 보기">
            <svg width="20" height="20" fill="none" stroke={ink} strokeWidth="1.600">
              <path d="M1 1h18v18H1zM5 4.500h10v11H5zM7 7.500h6M7 10h6M7 12.500h6" />
            </svg>
          </ViewButton>
          <ViewButton aria-label="페이지 나누기 보기">
            <svg width="20" height="20" fill="none" stroke={ink} strokeWidth="1.600">
              <path d="M1 1h18v18H1zM1 11h12V1M7 1v10" />
            </svg>
          </ViewButton>
          <IconButton $w={26} aria-label="축소">
            <svg width="12" height="12" stroke="#4c4e4d" strokeWidth="1.500"><path d="M0 6h12" /></svg>
          </IconButton>
          <ZoomRange type="range" min={0} max={100} defaultValue={50} aria-label="확대/축소" />
          <IconButton $w={26} aria-label="확대">
            <svg width="12" height="12" stroke="#4c4e4d" strokeWidth="1.500"><path d="M0 6h12M6 0v12" /></svg>
          </IconButton>
          <ZoomValue>100%</ZoomValue>
        </StatusSide>
      </StatusBar>
    </>
  );
}

function WindowsTaskbar() {
  return (
    <Taskbar>
      <Weather>
        <Sun />
        <div>
          <span>9°C</span>
          <span>맑음</span>
        </div>
      </Weather>
      <Tray>
        <TrayItem $w={30} aria-label="숨겨진 아이콘"><Chevron s={20} up w={1} /></TrayItem>
        <TrayItem $w={50} aria-label="입력기">
          <svg width="18" height="23" fill="none" stroke="#25302f" strokeWidth="1.500">
            <path d="M1 22.500L9 1l8 21.500M4 15h10" />
          </svg>
        </TrayItem>
        <TrayItem $w={40} aria-label="네트워크">
          <svg width="24" height="24" fill="none" stroke="#1b2827" strokeWidth="1.700">
            <path d="M15 2H3Q1 2 1 4v12q0 2 2 2h16M5 22.500h13M8.500 18v4M13.500 18v4" />
            <path d="M17.500 2h5v7h-5zM20 9v14M17.500 5h5" />
          </svg>
        </TrayItem>
        <TrayItem $w={28} aria-label="볼륨">
          <svg width="24" height="20" fill="none" stroke="#1b2827" strokeWidth="1.500">
            <path d="M1 7h4l6-5v16l-6-5H1zM14 7q2 3 0 6" />
            <path d="M17 5q3.500 5 0 10M20 3q4.500 7 0 14" opacity=".25" />
          </svg>
        </TrayItem>
        <TrayItem $w={40} aria-label="배터리">
          <svg width="24" height="20" fill="none" stroke="#101a19" strokeWidth="1.600">
            <path d="M10 4.500h8q3 0 3 3v7.500q0 3-3 3H5q-3 0-3-3v-4M21 10h2.500v3H21" />
            <path d="M11 8h7v7H5.500v-3z" fill="#101a19" stroke="none" />
            <path d="M6 0L1 7h3l-1 4 5-6H5.500z" fill="#101a19" stroke="none" />
          </svg>
        </TrayItem>
        <Clock dateTime="2023-02-22T16:56">
          오후 4:56
          <br />
          2023-02-22
        </Clock>
        <Badge>17</Badge>
      </Tray>
    </Taskbar>
  );
}

interface ChoiceRowProps {
  type: "checkbox" | "radio";
  title: string;
  hint: string;
  checked?: boolean;
}

function ChoiceRow({ type, title, hint, checked }: ChoiceRowProps) {
  return (
    <OptionRow>
      <Choice type={type} name={type === "radio" ? "mouse-mode" : "resize"} defaultChecked={checked} />
      <span>
        <OptionTitle>{title}</OptionTitle>
        <OptionHint>{hint}</OptionHint>
      </span>
    </OptionRow>
  );
}

function OptionsDialog() {
  return (
    <Overlay>
      <Dialog role="dialog" aria-label="옵션">
        <DialogHeader>
          <CloseButton aria-label="닫기">
            <svg width="28" height="28" stroke="#fff" strokeWidth="4"><path d="M1.500 1.500l25 25M26.500 1.500l-25 25" /></svg>
          </CloseButton>
        </DialogHeader>
        <OptionSection>
          <OptionHeading>표시 옵션</OptionHeading>
          <ChoiceRow type="checkbox" title="데스크톱 크기 조정" hint="원격 데스크톱의 해상도를 창 크기에 맞게 업데이트합니다" />
        </OptionSection>
        <OptionSection>
          <OptionHeading>마우스 옵션</OptionHeading>
          <ChoiceRow type="radio" title="터치 모드" hint="화면이 터치스크린처럼 작동합니다" checked />
          <ChoiceRow type="radio" title="트랙패드 모드" hint="화면이 트랙패드처럼 작동합니다" />
        </OptionSection>
        <OptionSection>
          <OptionHeading>키보드 옵션</OptionHeading>
          <CommandButton><KeyName>Ctrl-Alt-Del</KeyName> 전송</CommandButton>
          <CommandButton><KeyName>PrtScn</KeyName> 전송</CommandButton>
        </OptionSection>
        <OptionSection>
          <OptionHeading>지원</OptionHeading>
          <CommandButton>고객센터</CommandButton>
          <CommandButton>의견 보내기</CommandButton>
        </OptionSection>
      </Dialog>
    </Overlay>
  );
}

export default function App() {
  return (
    <Screen>
      <GlobalStyle />
      <RemoteDesktop>
        <ExcelWindow>
          <ExcelTitle />
          <RibbonTabs />
          <ExcelRibbon />
          <Formula />
          <Sheet />
          <SheetFooter />
        </ExcelWindow>
        <WindowsTaskbar />
      </RemoteDesktop>
      <OptionsDialog />
      <Multitask><i /><i /><i /></Multitask>
      <MenuButton aria-label="메뉴"><i /><i /><i /></MenuButton>
      <HomeIndicator />
    </Screen>
  );
}
